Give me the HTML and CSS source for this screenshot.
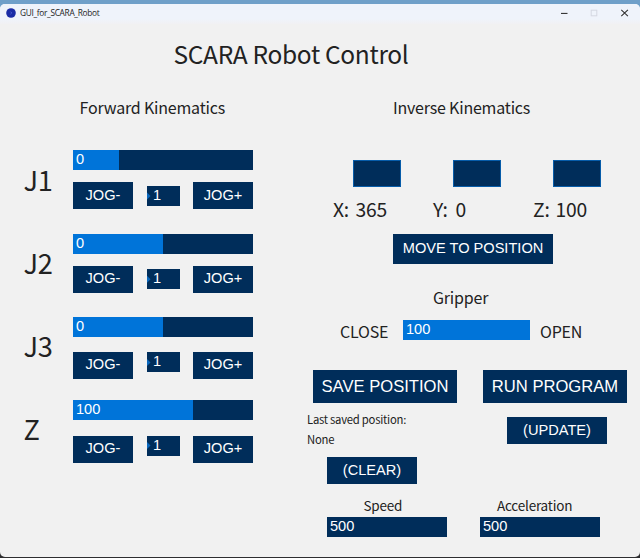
FILE: index.html
```html
<!DOCTYPE html>
<html lang="en">
<head>
<meta charset="utf-8">
<title>GUI_for_SCARA_Robot</title>
<link rel="stylesheet" href="styles.css">
</head>
<body>
<div class="window">
  <header class="titlebar">
    <svg class="app-icon" viewBox="0 0 10 10"><circle cx="5" cy="5" r="4.8" fill="#1a2ba6"/><path d="M4.4 3.6L5.8 5L4.4 6.2" fill="none" stroke="#5267d8" stroke-width=".8"/></svg>
    <span class="app-name">GUI_for_SCARA_Robot</span>
    <svg class="controls" viewBox="0 0 70 10"><path d="M1 5.4H7.5" stroke="#222" stroke-width="1"/><rect x="31.2" y="2.2" width="5.6" height="5.6" fill="none" stroke="#d5d8e2"/><path d="M61.3 1.8L67.9 8.2M67.9 1.8L61.3 8.2" stroke="#333" stroke-width="1.1"/></svg>
  </header>
  <h1 class="title">SCARA Robot Control</h1>
  <main class="columns">
    <section class="forward">
      <h2 class="heading">Forward Kinematics</h2>
      <div class="joints">
        <div class="joint">
          <span class="joint-name">J1</span>
          <div class="slider" style="--fill:25.4%">0</div>
          <div class="jog"><button class="btn">JOG-</button><span class="step">1</span><button class="btn">JOG+</button></div>
        </div>
        <div class="joint">
          <span class="joint-name">J2</span>
          <div class="slider" style="--fill:50%">0</div>
          <div class="jog"><button class="btn">JOG-</button><span class="step">1</span><button class="btn">JOG+</button></div>
        </div>
        <div class="joint low">
          <span class="joint-name">J3</span>
          <div class="slider" style="--fill:50%">0</div>
          <div class="jog"><button class="btn">JOG-</button><span class="step">1</span><button class="btn">JOG+</button></div>
        </div>
        <div class="joint low">
          <span class="joint-name">Z</span>
          <div class="slider" style="--fill:66.7%">100</div>
          <div class="jog"><button class="btn">JOG-</button><span class="step">1</span><button class="btn">JOG+</button></div>
        </div>
      </div>
    </section>
    <section class="inverse">
      <h2 class="heading">Inverse Kinematics</h2>
      <div class="coords">
        <div class="coord"><span class="field"></span><div class="readout"><span class="axis">X:</span><span>365</span></div></div>
        <div class="coord"><span class="field"></span><div class="readout"><span class="axis">Y:</span><span>0</span></div></div>
        <div class="coord"><span class="field"></span><div class="readout"><span class="axis">Z:</span><span>100</span></div></div>
      </div>
      <button class="btn move">MOVE TO POSITION</button>
      <h2 class="gripper-title">Gripper</h2>
      <div class="gripper">
        <span class="close">CLOSE</span>
        <div class="slider" style="--fill:100%">100</div>
        <span class="open">OPEN</span>
      </div>
      <div class="actions"><button class="btn large">SAVE POSITION</button><button class="btn large">RUN PROGRAM</button></div>
      <div class="program">
        <div class="saved">
          <p class="note">Last saved position:</p>
          <p class="note">None</p>
          <button class="btn clear">(CLEAR)</button>
        </div>
        <button class="btn update">(UPDATE)</button>
      </div>
      <div class="limits">
        <div class="limit"><span class="limit-name speed">Speed</span><div class="slider" style="--fill:0%">500</div></div>
        <div class="limit"><span class="limit-name accel">Acceleration</span><div class="slider" style="--fill:0%">500</div></div>
      </div>
    </section>
  </main>
</div>
</body>
</html>
```
FILE: styles.css
```css
* { box-sizing: border-box; }
body {
  margin: 0;
  height: 558px;
  padding: 3.5px 0 1px;
  overflow: hidden;
  background: linear-gradient(#6f9fc9 0 50%, #2e2e30 50%);
  color: #222;
  font-family: "Noto Sans CJK SC", "Noto Sans", sans-serif;
}
h1, h2, p { margin: 0; font-weight: 400; }
span, p, h1, h2, button { white-space: nowrap; }
.window {
  height: 553.5px;
  background: #f1f1f1;
  border-radius: 5px;
  overflow: hidden;
}
.titlebar {
  display: flex;
  align-items: center;
  height: 20.5px;
  padding: 0 10px 1px 6px;
  background: linear-gradient(#eff3fb 75%, #f1f1f3);
}
.app-icon { width: 10px; height: 10px; }
.app-name {
  margin-left: 4px;
  font: 8.3px/12px "Open Sans", sans-serif;
  letter-spacing: -.3px;
}
.controls { width: 70px; height: 10px; margin-left: auto; }
.title {
  margin: 12px 0 0 173.5px;
  font-size: 24.5px;
  letter-spacing: -.32px;
  line-height: 36px;
}
.columns { display: flex; }
.forward { width: 300px; }
.inverse { width: 340px; }
.heading { margin-top: 23px; font-size: 16px; letter-spacing: -.2px; line-height: 24px; }
.forward .heading { margin-left: 79.5px; }
.inverse .heading { margin-left: 93px; }
.joints { padding: 31.45px 0 0 23.5px; }
.joint {
  display: grid;
  grid-template-columns: 49.5px 180px;
  grid-template-rows: 20px 1fr;
  height: 83.2px;
}
.joint-name {
  grid-row: 1 / 3;
  margin-top: 8.4px;
  font-size: 27.2px;
  letter-spacing: -.4px;
  line-height: 40px;
}
.slider {
  height: 20px;
  padding-left: 3px;
  background: linear-gradient(90deg, #0074d9 var(--fill), #002d5a var(--fill));
  color: #fff;
  font: 14.6px/19px "Liberation Sans", sans-serif;
}
.jog {
  display: flex;
  justify-content: space-between;
  align-items: flex-start;
  margin-top: 12px;
}
.btn {
  display: block;
  width: 60px;
  height: 27px;
  padding: 0 0 1px;
  border: 0;
  background: #002d5a;
  color: #fff;
  font: 14.6px/25px "Liberation Sans", sans-serif;
  text-align: center;
}
.step {
  width: 33px;
  height: 20px;
  margin-top: 3.5px;
  padding-left: 6.5px;
  background: #002d5a;
  color: #fff;
  font: 14.6px/19px "Liberation Sans", sans-serif;
}
.step::before {
  content: "";
  float: left;
  width: 4px;
  height: 8px;
  margin: 6px 0 0 -6.5px;
  background: #0867bd;
  clip-path: polygon(0 0, 100% 50%, 0 100%);
}
.low .jog { margin-top: 15.6px; }
.low .btn { padding-bottom: 2px; }
.low .step { margin-top: 0; }
.coords { display: flex; margin: 41px 0 0 33px; }
.coord { width: 100px; }
.field {
  display: block;
  width: 48px;
  height: 27px;
  margin-left: 20px;
  border: 1px solid #075ca9;
  background: #002d5a;
}
.readout {
  display: flex;
  margin-top: 8px;
  font-size: 19.3px;
  letter-spacing: -.2px;
  line-height: 28px;
}
.axis { width: 22.5px; }
.move { width: 160px; height: 30px; margin: 11px 0 0 93px; padding-bottom: 2px; line-height: 28px; }
.gripper-title { margin: 21px 0 0 133px; font-size: 16px; letter-spacing: -.2px; line-height: 24px; }
.gripper { display: flex; margin-top: 11.2px; font-size: 16px; letter-spacing: -.2px; line-height: 22px; }
.gripper .slider { width: 127px; letter-spacing: 0; }
.close { width: 63px; margin-left: 40px; }
.open { margin-left: 10px; }
.actions { display: flex; gap: 26px; margin: 27.8px 0 0 13px; }
.large { width: 144px; height: 33.5px; font-size: 16.6px; line-height: 31px; }
.program { display: flex; align-items: flex-start; margin: 5.5px 0 0 7px; }
.saved { width: 200px; }
.note { font-size: 11.3px; letter-spacing: -.25px; line-height: 20px; }
.clear { width: 90px; margin: 8.2px 0 0 20px; }
.update { width: 100px; margin-top: 8.2px; }
.limits { display: flex; gap: 33px; margin: 10px 0 0 27px; }
.limit { width: 120px; }
.limit-name { display: block; margin-bottom: 1px; font-size: 13.5px; letter-spacing: -.2px; line-height: 22px; }
.speed { margin-left: 36.5px; }
.accel { margin-left: 17px; }
```
